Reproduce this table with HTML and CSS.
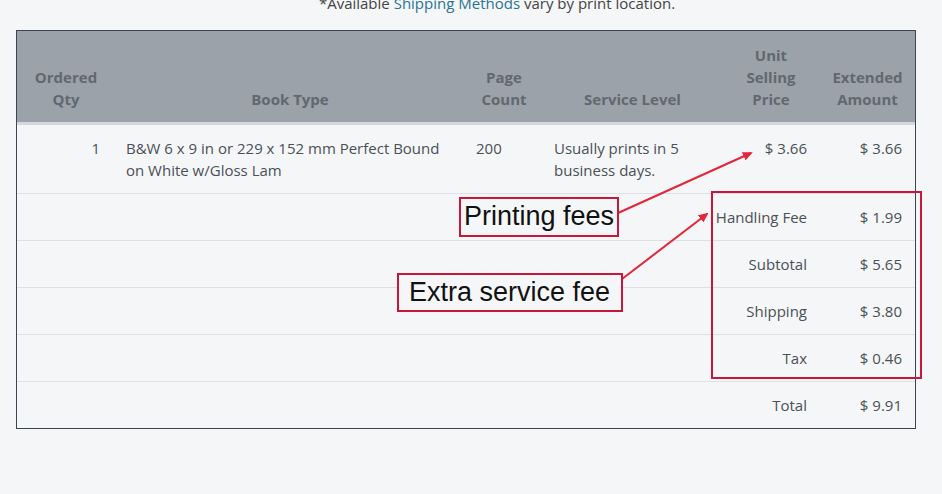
FILE: index.html
```html
<!DOCTYPE html>
<html lang="en">
<head>
  <meta charset="UTF-8">
  <title>Order Summary</title>
  <link rel="stylesheet" href="styles.css">
</head>
<body>
  <div class="page">
    <p class="note">*Available <a href="#">Shipping Methods</a> vary by print location.</p>

    <div class="order">
      <table>
        <colgroup>
          <col class="c-qty"><col class="c-type"><col class="c-pages"><col class="c-level"><col class="c-unit"><col class="c-ext">
        </colgroup>
        <thead>
          <tr>
            <th>Ordered<br>Qty</th>
            <th>Book Type</th>
            <th>Page<br>Count</th>
            <th>Service Level</th>
            <th>Unit<br>Selling<br>Price</th>
            <th>Extended<br>Amount</th>
          </tr>
        </thead>
        <tbody>
          <tr class="item">
            <td class="num">1</td>
            <td>B&amp;W 6 x 9 in or 229 x 152 mm Perfect Bound on White w/Gloss Lam</td>
            <td>200</td>
            <td>Usually prints in 5 business days.</td>
            <td class="num">$ 3.66</td>
            <td class="num">$ 3.66</td>
          </tr>
          <tr class="sum"><td colspan="5">Handling Fee</td><td>$ 1.99</td></tr>
          <tr class="sum"><td colspan="5">Subtotal</td><td>$ 5.65</td></tr>
          <tr class="sum"><td colspan="5">Shipping</td><td>$ 3.80</td></tr>
          <tr class="sum"><td colspan="5">Tax</td><td>$ 0.46</td></tr>
          <tr class="sum last"><td colspan="5">Total</td><td>$ 9.91</td></tr>
        </tbody>
      </table>
    </div>
  </div>

  <!-- annotations drawn over the screenshot -->
  <svg class="marks" width="942" height="494" viewBox="0 0 942 494">
    <defs>
      <marker id="head" markerWidth="10" markerHeight="9" refX="8" refY="4.5" orient="auto" markerUnits="userSpaceOnUse">
        <path d="M0 0 L10 4.5 L0 9 Z" fill="#e3263a"/>
      </marker>
    </defs>
    <rect x="712" y="192" width="209" height="186" fill="none" stroke="#c8173a" stroke-width="2"/>
    <line x1="618" y1="213" x2="751" y2="153" stroke="#e3263a" stroke-width="2" marker-end="url(#head)"/>
    <line x1="622" y1="279" x2="707" y2="214" stroke="#e3263a" stroke-width="2" marker-end="url(#head)"/>
  </svg>
  <div class="tag tag-print">Printing fees</div>
  <div class="tag tag-extra">Extra service fee</div>
</body>
</html>
```

FILE: styles.css
```css
body {
  margin: 0;
  position: relative;
  font-family: 'Open Sans', 'Noto Sans', sans-serif;
  font-size: 15px;
  line-height: 22px;
  background-color: #f4f6f8;
  color: #4b5056;
  overflow: hidden;
  height: 494px;
}

.page {
  padding: 0 26px 0 16px;
}

.note {
  margin: -8px 0 16px;
  padding-left: 62px;
  text-align: center;
  color: #444;
}

.note a {
  color: #2b7396;
  text-decoration: none;
}

.order {
  border: 1px solid #3d4550;
  width: 898px;
}

table {
  width: 100%;
  border-collapse: collapse;
  table-layout: fixed;
}

.c-qty { width: 98px; }
.c-type { width: 350px; }
.c-pages { width: 78px; }
.c-level { width: 179px; }
.c-unit { width: 98px; }
.c-ext { width: 95px; }

th {
  background-color: #9ba2a9;
  color: #62686f;
  font-weight: bold;
  text-align: center;
  vertical-align: bottom;
  padding: 13px 4px 12px;
  border-bottom: 3px solid #d3d8dc;
}

td {
  padding: 12px 13px 12px 11px;
  vertical-align: top;
  border-bottom: 1px solid #dde1e5;
}

td.num {
  text-align: right;
}

.item td:first-child {
  padding-right: 15px;
}

.sum td {
  text-align: right;
  vertical-align: middle;
}

.sum.last td {
  border-bottom: none;
}

.marks {
  position: absolute;
  top: 0;
  left: 0;
  pointer-events: none;
}

.tag {
  position: absolute;
  font-family: 'Liberation Sans', Arial, sans-serif;
  font-size: 27px;
  line-height: 35px;
  color: #111;
  background-color: #f5f6f8;
  border: 2px solid #c8173a;
  padding: 0 3px;
  box-sizing: border-box;
  white-space: nowrap;
}

.tag-print {
  left: 459px;
  top: 197px;
  width: 160px;
  height: 40px;
}

.tag-extra {
  left: 397px;
  top: 273px;
  width: 226px;
  height: 39px;
  padding-left: 10px;
}
```
